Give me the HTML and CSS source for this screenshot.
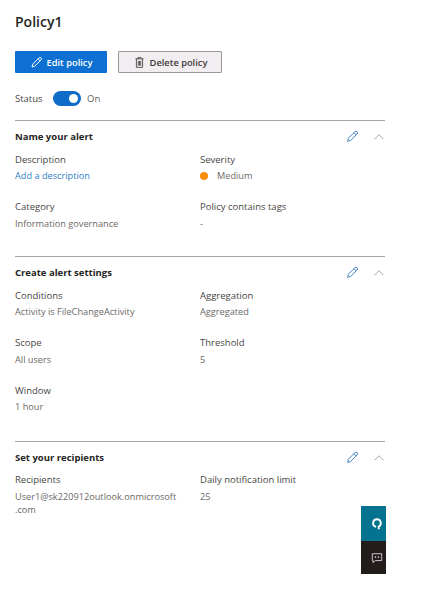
FILE: index.html
```html
<!DOCTYPE html>
<html lang="en">
<head>
<meta charset="utf-8">
<title>Policy1</title>
<link rel="stylesheet" href="styles.css">
</head>
<body>
<main class="page">
  <h1 class="title">Policy1</h1>
  <div class="actions">
    <button class="btn primary">
      <svg class="btn-icon" viewBox="0 0 16 16"><path d="M2.500 13.500l1-3.600 7.600-7.600a1.700 1.700 0 0 1 2.500 2.500l-7.600 7.600zM10 3.500l2.500 2.500" fill="none" stroke="currentColor" stroke-width="1.200"/></svg>
      Edit policy
    </button>
    <button class="btn secondary">
      <svg class="btn-icon" viewBox="0 0 16 16"><path d="M3 3.500h10M6 3.500V2h4v1.500M4.200 3.500v10.500h7.600V3.500M6.500 6v6M8 6v6M9.500 6v6" fill="none" stroke="currentColor" stroke-width="1"/></svg>
      Delete policy
    </button>
  </div>
  <div class="status">
    <span class="status-label">Status</span>
    <span class="toggle"><span class="knob"></span></span>
    <span class="status-on">On</span>
  </div>

  <section class="section first">
    <header class="head">
      <h2>Name your alert</h2>
      <svg class="edit" viewBox="0 0 16 16"><path d="M2 14l1-4 7.800-7.800a1.800 1.800 0 0 1 2.800 2.800L5.800 12.800zM9.800 3.300l2.800 2.800" fill="none" stroke="currentColor" stroke-width="1.200"/></svg>
      <svg class="chev" viewBox="0 0 16 10"><path d="M2 8l6-6 6 6" fill="none" stroke="currentColor" stroke-width="1"/></svg>
    </header>
    <div class="grid">
      <div class="field"><div class="label">Description</div><div class="value link">Add a description</div></div>
      <div class="field"><div class="label">Severity</div><div class="value sev"><span class="dot"></span>Medium</div></div>
      <div class="field"><div class="label">Category</div><div class="value">Information governance</div></div>
      <div class="field"><div class="label">Policy contains tags</div><div class="value">-</div></div>
    </div>
  </section>

  <section class="section">
    <header class="head">
      <h2>Create alert settings</h2>
      <svg class="edit" viewBox="0 0 16 16"><path d="M2 14l1-4 7.800-7.800a1.800 1.800 0 0 1 2.800 2.800L5.800 12.800zM9.800 3.300l2.800 2.800" fill="none" stroke="currentColor" stroke-width="1.200"/></svg>
      <svg class="chev" viewBox="0 0 16 10"><path d="M2 8l6-6 6 6" fill="none" stroke="currentColor" stroke-width="1"/></svg>
    </header>
    <div class="grid">
      <div class="field"><div class="label">Conditions</div><div class="value">Activity is FileChangeActivity</div></div>
      <div class="field"><div class="label">Aggregation</div><div class="value">Aggregated</div></div>
      <div class="field"><div class="label">Scope</div><div class="value">All users</div></div>
      <div class="field"><div class="label">Threshold</div><div class="value">5</div></div>
      <div class="field"><div class="label">Window</div><div class="value">1 hour</div></div>
    </div>
  </section>

  <section class="section">
    <header class="head">
      <h2>Set your recipients</h2>
      <svg class="edit" viewBox="0 0 16 16"><path d="M2 14l1-4 7.800-7.800a1.800 1.800 0 0 1 2.800 2.800L5.800 12.800zM9.800 3.300l2.800 2.800" fill="none" stroke="currentColor" stroke-width="1.200"/></svg>
      <svg class="chev" viewBox="0 0 16 10"><path d="M2 8l6-6 6 6" fill="none" stroke="currentColor" stroke-width="1"/></svg>
    </header>
    <div class="grid tight">
      <div class="field"><div class="label">Recipients</div><div class="value wrap">User1@sk220912outlook.onmicrosoft<br>.com</div></div>
      <div class="field"><div class="label">Daily notification limit</div><div class="value">25</div></div>
    </div>
  </section>
</main>
<aside class="dock">
  <div class="dock-btn teal">
    <svg viewBox="0 0 12 14" class="dock-icon"><path d="M6 1.500a4.500 4.500 0 0 0-1 8.900M6 1.500a4.500 4.500 0 0 1 2 8.500V13" fill="none" stroke="#fff" stroke-width="2.200"/></svg>
  </div>
  <div class="dock-btn dark">
    <svg viewBox="0 0 14 14" class="dock-icon"><path d="M1.500 2h11v8H5l-2.500 2.500V10h-1z" fill="none" stroke="#e8dcf0" stroke-width="1"/><path d="M4.500 6h1.500M8 6h1.500" stroke="#fff" stroke-width="1.500"/></svg>
  </div>
</aside>
</body>
</html>
```

FILE: styles.css
```css
* { box-sizing: border-box; }
html, body { margin: 0; padding: 0; background: #fff; }
body {
  width: 432px;
  height: 601px;
  overflow: hidden;
  position: relative;
  font-family: "Open Sans", "Noto Sans", sans-serif;
  color: #323130;
}
.page { width: 385px; padding: 12px 0 0 15px; }
.title { margin: 0; font-size: 14px; line-height: 20px; font-weight: 600; color: #252423; }
.actions { display: flex; gap: 11px; margin-top: 19px; }
.btn {
  display: flex;
  align-items: center;
  justify-content: center;
  gap: 4px;
  height: 22px;
  padding: 0;
  font-family: inherit;
  font-size: 9.3px;
  font-weight: 600;
  border-radius: 1px;
}
.btn-icon { width: 13px; height: 13px; }
.primary { width: 92px; background: #0f70d4; border: 0; color: #fff; }
.secondary { width: 104px; background: #f1edf1; border: 1px solid #9a9896; color: #3b3a39; }
.status { display: flex; align-items: center; height: 16px; margin-top: 17px; font-size: 9.5px; }
.status-label { width: 38px; color: #4a4847; }
.toggle {
  display: flex;
  justify-content: flex-end;
  align-items: center;
  width: 28px;
  height: 15px;
  padding-right: 3px;
  border-radius: 8px;
  background: #0f6cc9;
}
.knob { width: 9px; height: 9px; border-radius: 50%; background: #fff; }
.status-on { margin-left: 6px; color: #605e5c; }
.section { border-top: 1px solid #a9a7a5; height: 185px; padding-top: 9px; }
.section.first { margin-top: 14px; height: 136px; }
.head { display: flex; align-items: center; height: 13px; }
.head h2 { flex: 1; margin: 0; font-size: 9.5px; line-height: 13px; font-weight: 700; color: #252423; }
.edit { width: 13px; height: 13px; color: #3f80c4; margin-right: 14px; }
.chev { width: 12px; height: 8px; color: #8a8886; }
.grid { display: grid; grid-template-columns: 185px 1fr; row-gap: 15px; margin-top: 8.5px; }
.grid.tight { margin-top: 8px; }
.field { min-height: 32px; }
.label { font-size: 9.5px; line-height: 16px; color: #484644; }
.value { font-size: 9.2px; line-height: 16px; margin-top: 0.5px; color: #6b6967; }
.wrap { line-height: 13px; margin-top: 2px; }
.link { color: #2f7fc7; }
.sev { display: flex; align-items: center; }
.dot { width: 8px; height: 8px; border-radius: 50%; background: #f98b0c; margin-right: 9px; }
.dock { position: absolute; left: 361px; top: 506px; width: 25px; }
.dock-btn { display: flex; align-items: center; justify-content: flex-end; padding-right: 3px; }
.teal { height: 35px; background: #04738f; }
.dark { height: 33px; background: #221d1b; }
.dock-icon { width: 12px; height: 12px; }
```
